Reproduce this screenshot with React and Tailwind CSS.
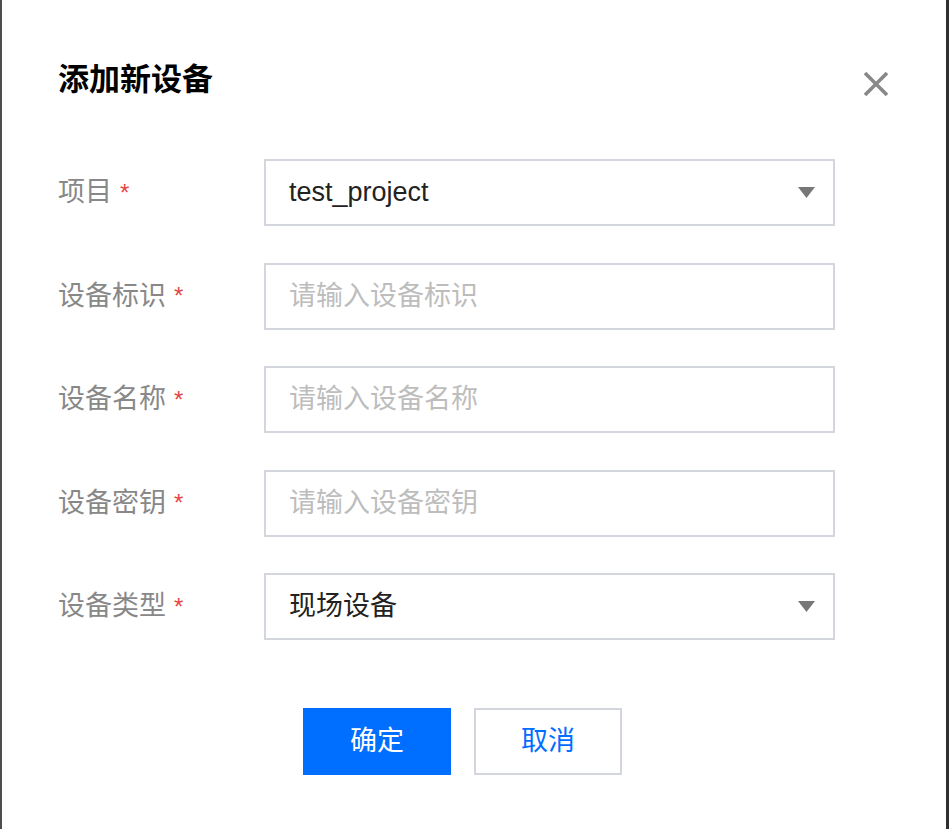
import React from "react";

const fields = [
  { label: "项目", type: "select", value: "test_project" },
  { label: "设备标识", type: "input", placeholder: "请输入设备标识" },
  { label: "设备名称", type: "input", placeholder: "请输入设备名称" },
  { label: "设备密钥", type: "input", placeholder: "请输入设备密钥" },
  { label: "设备类型", type: "select", value: "现场设备" },
];

const font = { fontFamily: '"Liberation Sans", "Noto Sans CJK SC", sans-serif' };

function Caret() {
  return (
    <svg width="17" height="11" viewBox="0 0 17 11" className="shrink-0">
      <path d="M0 0 H17 L8.5 11 Z" fill="#777" />
    </svg>
  );
}

function App() {
  return (
    <div
      className="w-[949px] h-[829px] bg-white border-l-2 border-l-[#4d4d4d] border-r-[3px] border-r-[#2f2f2f] overflow-hidden"
      style={font}
    >
      {/* header */}
      <div className="flex justify-between items-start pl-[56px] pr-[57px] pt-[60px] h-[159px]">
        <h1 className="text-[31px] leading-[40px] font-bold text-black">添加新设备</h1>
        <button className="mt-[11px] w-[26px] h-[26px] flex items-center justify-center">
          <svg width="26" height="26" viewBox="0 0 26 26">
            <path d="M2 2 L24 24 M24 2 L2 24" stroke="#888" strokeWidth="3.6" />
          </svg>
        </button>
      </div>

      {/* form */}
      <div className="flex flex-col gap-[36.5px] pl-[56px]">
        {fields.map((f) => (
          <div key={f.label} className="flex items-center h-[67px]">
            <div className="w-[206px] flex items-center text-[27px] text-[#888]">
              <span>{f.label}</span>
              <span className="ml-[8px] text-[#e54545] text-[24px]">*</span>
            </div>
            <div className="w-[571px] h-[67px] border-2 border-[#d3d6dc] flex items-center pl-[23px] pr-[18px]">
              {f.type === "select" ? (
                <>
                  <span className="flex-1 text-[27px] text-[#222]">{f.value}</span>
                  <Caret />
                </>
              ) : (
                <span className="flex-1 text-[27px] text-[#bdbdbd]">{f.placeholder}</span>
              )}
            </div>
          </div>
        ))}
      </div>

      {/* footer */}
      <div className="flex gap-[23px] pl-[301px] mt-[68px]">
        <button className="w-[148px] h-[67px] bg-[#006eff] text-white text-[27px]">确定</button>
        <button className="w-[148px] h-[67px] border-2 border-[#d3d6dc] bg-white text-[#006eff] text-[27px]">
          取消
        </button>
      </div>
    </div>
  );
}

export default App;
